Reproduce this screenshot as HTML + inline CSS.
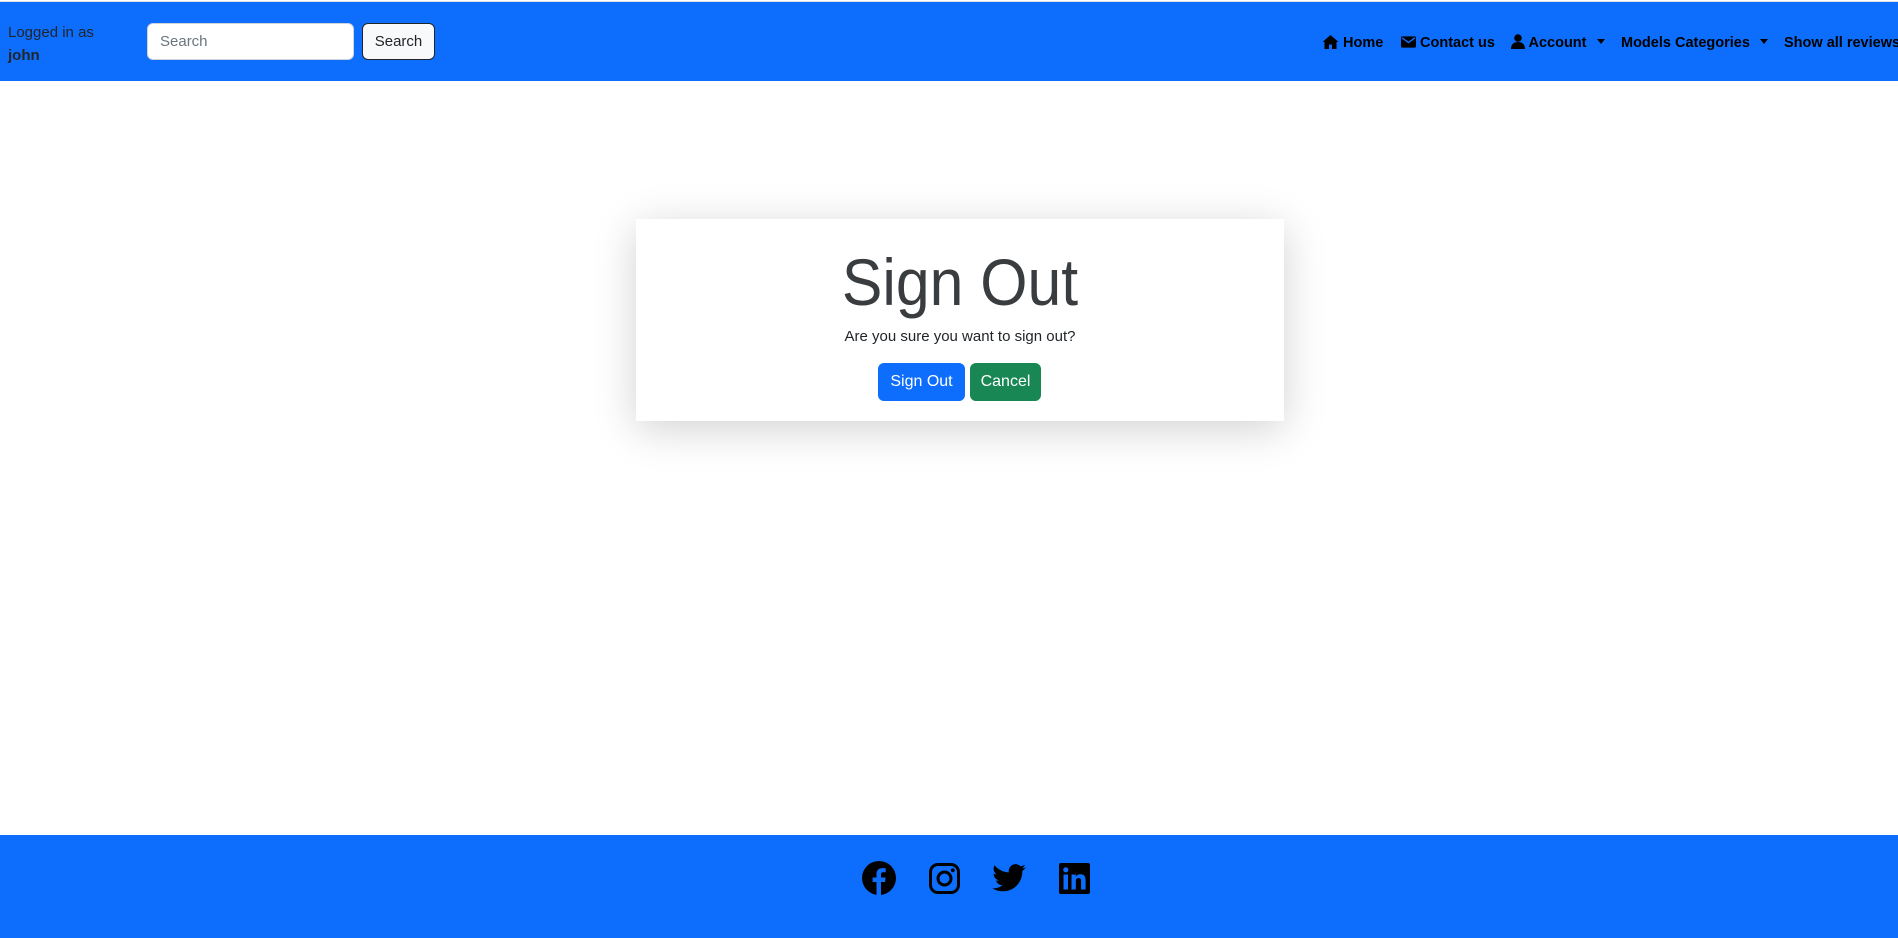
<!DOCTYPE html>
<html><head><meta charset="utf-8"><style>
*{box-sizing:border-box;margin:0;padding:0}
body{width:1898px;height:938px;overflow:hidden;background:#fff;font-family:"Liberation Sans",sans-serif;color:#212529;position:relative}
.nav{position:absolute;left:0;top:1px;width:1898px;height:80px;background:#0d6efd;border-top:1px solid #e0e0e0}
.abs{position:absolute}
.ni{position:absolute;top:32px;font-weight:bold;font-size:14.5px;color:#000;white-space:nowrap;line-height:18px}
.footer{position:absolute;left:0;top:835px;width:1898px;height:103px;background:#0d6efd}
.card{position:absolute;left:636px;top:219px;width:648px;height:202px;background:#fff;box-shadow:0 8px 40px rgba(0,0,0,.18)}
.btn{position:absolute;top:144px;height:38px;border-radius:6px;color:#fff;font-size:16px;line-height:38px;text-align:center}
</style></head><body>
<div class="nav">
  <div class="abs" style="left:8px;top:19px;font-size:15px;line-height:23px;color:#212529">Logged in as<br><b>john</b></div>
  <div class="abs" style="left:147px;top:21px;width:207px;height:37px;background:#fff;border-radius:6px;border:1px solid #ced4da;font-size:15px;color:#6c757d;padding:9px 12px">Search</div>
  <div class="abs" style="left:362px;top:21px;width:73px;height:37px;background:#f8f9fa;border-radius:6px;border:1px solid #212529;font-size:15px;line-height:35px;text-align:center">Search</div>
  <div class="ni" style="left:1322px"><svg width="17" height="14" viewBox="0 0 16 14" style="vertical-align:-2px"><path d="M8 0L0 7h2v7h4.5V9.5h3V14H14V7h2z" fill="#000"/></svg> Home</div>
  <div class="ni" style="left:1401px"><svg width="15" height="12" viewBox="0 0 16 12" style="vertical-align:-1px"><rect width="16" height="12" rx="1.5" fill="#000"/><path d="M1 1.5l7 5 7-5" stroke="#0d6efd" stroke-width="1.5" fill="none"/></svg> Contact us</div>
  <div class="ni" style="left:1511px"><svg width="14" height="15" viewBox="0 0 14 15" style="vertical-align:-2px"><circle cx="7" cy="4" r="3.8" fill="#000"/><path d="M0 15c0-5 3-7 7-7s7 2 7 7z" fill="#000"/></svg> Account <span style="display:inline-block;margin-left:6px;border-left:4px solid transparent;border-right:4px solid transparent;border-top:5px solid #000;vertical-align:3px"></span></div>
  <div class="ni" style="left:1621px">Models Categories <span style="display:inline-block;margin-left:6px;border-left:4px solid transparent;border-right:4px solid transparent;border-top:5px solid #000;vertical-align:3px"></span></div>
  <div class="ni" style="left:1784px">Show all reviews</div>
</div>
<div class="card">
  <div class="abs" style="left:0;width:648px;top:27px;text-align:center;font-size:66px;line-height:72px;color:#3a3d40;transform:scaleX(0.92)">Sign Out</div>
  <div class="abs" style="left:0;width:648px;top:108px;text-align:center;font-size:15px;line-height:20px">Are you sure you want to sign out?</div>
  <div class="btn" style="left:242px;width:87px;background:#0d6efd">Sign Out</div>
  <div class="btn" style="left:334px;width:71px;background:#198754">Cancel</div>
</div>
<div class="footer">
  <svg class="abs" style="left:862px;top:26px" width="34" height="34" viewBox="0 0 34 34"><circle cx="17" cy="17" r="17" fill="#000"/><path d="M19 34V21h4l.6-4.5H19v-3c0-1.3.4-2.2 2.3-2.2h2.4V7.3c-.4-.1-1.8-.2-3.5-.2-3.4 0-5.7 2.1-5.7 5.9v3.5h-3.9V21h3.9v13z" fill="#0d6efd"/></svg>
  <svg class="abs" style="left:929px;top:28px" width="31" height="31" viewBox="0 0 31 31"><rect x="1.5" y="1.5" width="28" height="28" rx="7.5" fill="none" stroke="#000" stroke-width="3"/><circle cx="15.5" cy="15.5" r="6.5" fill="none" stroke="#000" stroke-width="3"/><circle cx="23.8" cy="7.3" r="1.9" fill="#000"/></svg>
  <svg class="abs" style="left:992px;top:29px" width="34" height="28" viewBox="0 0 24 20"><path d="M24 2.4c-.9.4-1.8.6-2.8.8 1-.6 1.8-1.6 2.2-2.7-1 .6-2 1-3.1 1.2A4.9 4.9 0 0 0 11.9 6 14 14 0 0 1 1.7.9a4.9 4.9 0 0 0 1.5 6.6c-.8 0-1.600-.2-2.2-.6 0 2.4 1.700 4.4 3.9 4.8-.7.2-1.5.2-2.2.1.6 2 2.4 3.4 4.6 3.4A9.9 9.9 0 0 1 0 17.3 14 14 0 0 0 7.5 19.5c9.1 0 14-7.5 14-14v-.6c1-.7 1.8-1.6 2.5-2.5z" fill="#000"/></svg>
  <svg class="abs" style="left:1059px;top:28px" width="31" height="31" viewBox="0 0 31 31"><rect width="31" height="31" rx="2" fill="#000"/><rect x="4.5" y="11.5" width="4.5" height="15" fill="#0d6efd"/><circle cx="6.8" cy="6.8" r="2.6" fill="#0d6efd"/><path d="M12.5 11.5h4.3v2.1c.7-1.2 2.2-2.4 4.5-2.4 4.6 0 5.300 3 5.3 6.9v8.4h-4.5v-7.5c0-1.8 0-4-2.5-4s-2.8 1.9-2.8 3.9v7.6h-4.3z" fill="#0d6efd"/></svg>
</div>
</body></html>
